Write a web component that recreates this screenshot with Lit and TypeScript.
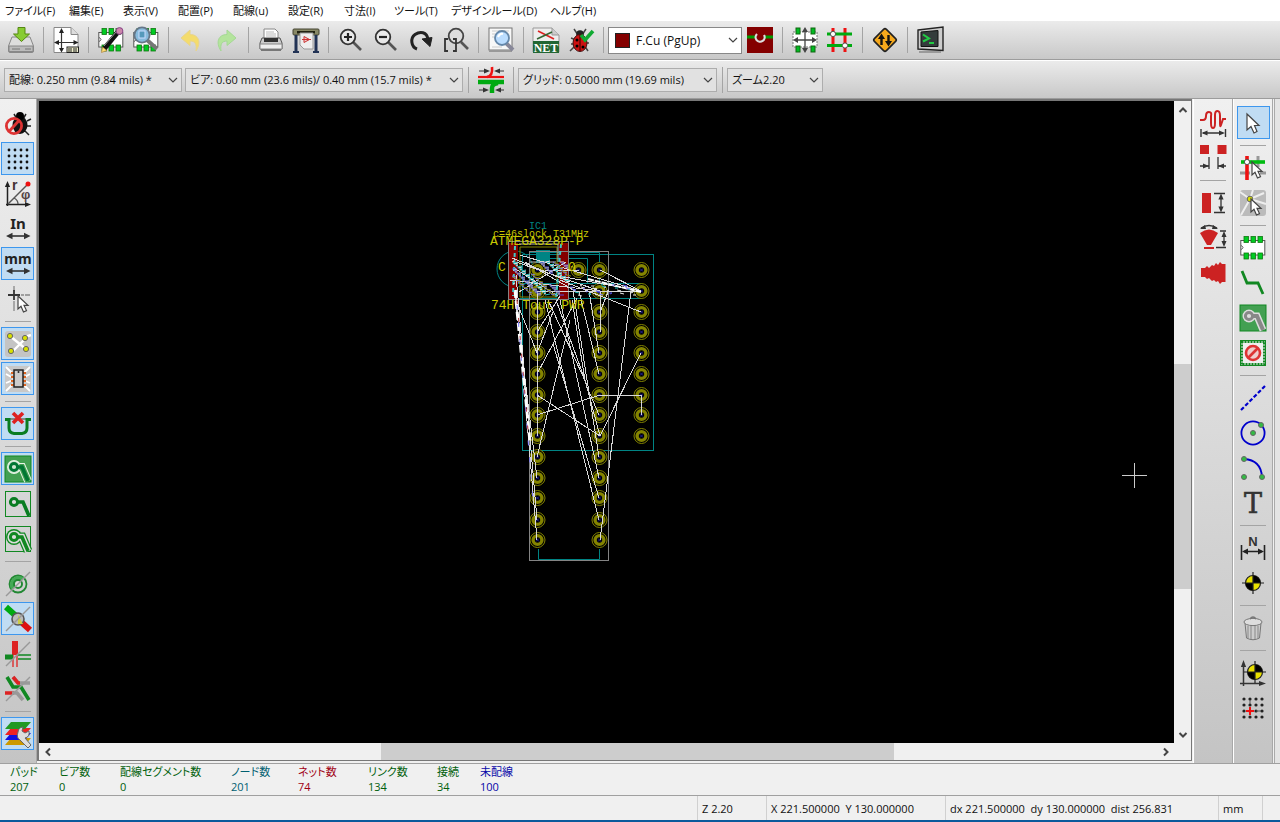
import { LitElement, html, svg, css } from "lit";
import { customElement } from "lit/decorators.js";
import { classMap } from "lit/directives/class-map.js";

const arrowCursor = (x: number, y: number) => svg`
  <path transform="translate(${x} ${y})" d="M0 0V13L3 10.300L5.500 16L8.500 14.600L6 9.300H10Z" fill="#fff" stroke="#444" stroke-width="1.200"/>`;

const chipPads = (w: number, y: number) => [0, 1, 2].map(i => svg`
  <rect x=${4 + i * w} y=${y} width="4.500" height="6" fill="#0c2" stroke="#171" stroke-width=".8"/>`);

const chip = svg`
  <rect x=".8" y="5.500" width="24" height="14.500" fill="#fff" stroke="#555"/>
  <path d="M1 10.500q4 2 0 4" fill="none" stroke="#555"/>
  ${chipPads(7, 1.500)}${chipPads(7, 18)}`;

const target = (x: number, y: number) => svg`
  <g transform="translate(${x} ${y})">
    <circle r="7.500" fill="#e8e000" stroke="#222" stroke-width="1.200"/>
    <path d="M0 0V-7.500A7.500 7.500 0 0 1 7.500 0ZM0 0V7.500A7.500 7.500 0 0 1 -7.500 0Z" fill="#000"/>
    <path d="M0 -11V11M-11 0H11" stroke="#222" stroke-width="1.200"/>
  </g>`;

const dot = (x: number, y: number, r = 2.5, fill = "#3b4") => svg`
  <circle cx=${x} cy=${y} r=${r} fill=${fill} stroke="#666" stroke-width="1"/>`;

const lens = (inner: unknown) => svg`
  <path d="M14.500 14.500L23 23" stroke="#555" stroke-width="2.600"/>
  <circle cx="10" cy="10" r="7.300" fill="#eee" fill-opacity=".7" stroke="#333" stroke-width="1.800"/>${inner}`;

const dimH = (y: number) => svg`
  <path d="M1 ${y - 4}V${y + 4}M25.500 ${y - 4}V${y + 4}M3 ${y}H23" stroke="#333" stroke-width="1.400"/>
  <path d="M1.500 ${y}l6 -2.600v5.200zM25 ${y}l-6 -2.600v5.200z" fill="#333"/>`;

const arrows = svg`
  <path d="M4 20H22" stroke="#333" stroke-width="1.600"/>
  <path d="M1 20l6.500 -3.200v6.400zM25.500 20l-6.500 -3.200v6.400z" fill="#333"/>`;

const slash = svg`<path d="M1 25L25 1" stroke="#999" stroke-width="1.400"/>`;

const icons: Record<string, unknown> = {
  save: svg`
    <path d="M4 10h18l3.500 9v5q0 1.500-1.500 1.500H2Q.5 25.500.5 24v-5z" fill="#ddd" stroke="#888"/>
    <path d="M1 19h24v5.500H1z" fill="#bbb" stroke="#888"/><path d="M4 22h8M18 21v2M20 21v2M22 21v2" stroke="#777"/>
    <path d="M10 .5h7v6.500h4.500L13.500 14.500 5.500 7H10z" fill="#8c3" stroke="#581"/>`,
  page: svg`
    <path d="M1 .5h17l7 7v18H1z" fill="#fff" stroke="#888"/><path d="M18 .5v7h7" fill="#ddd" stroke="#888"/>
    <path d="M8.500 3v21M3 15.500h21" stroke="#333" stroke-width="1.200"/>
    <path d="M8.500 1l2.500 5h-5zM8.500 25.500l2.500-4.500h-5zM1 15.500l5-2.500v5zM25.500 15.500l-5-2.500v5z" fill="#222"/>
    <rect x="14" y="20" width="11.500" height="5.500" fill="#eec" stroke="#222"/><path d="M15 22h4M20 22h4M15 24h4M20 24h4" stroke="#222"/>`,
  modedit: svg`${chip}
    <path d="M20 5L6 22" stroke="#111" stroke-width="5"/><path d="M18 5L6 19" stroke="#999" stroke-width="1"/>
    <path d="M4.500 20l4.500 3.500-5.500 2z" fill="#fd7" stroke="#a73" stroke-width=".6"/><circle cx="21.500" cy="4" r="3.400" fill="#c8a" stroke="#848"/>`,
  modview: svg`${chip}
    <path d="M14 13L24 22" stroke="#777" stroke-width="4"/>
    <circle cx="9" cy="8" r="7.600" fill="#8bd" stroke="#678" stroke-width="1.800"/><rect x="6" y="4" width="6" height="7" fill="#59b" stroke="#cdf"/>`,
  undo: svg`<path d="M3 11L12 3v4.500c8 0 12 7 6 16.500 1-7-1-10-6-10v4.500z" fill="#f4dc6c" stroke="#e8d48a"/>`,
  redo: svg`<path d="M23 11L14 3v4.500c-8 0-12 7-6 16.500-1-7 1-10 6-10v4.500z" fill="#b4e49c" stroke="#a4d894"/>`,
  print: svg`
    <path d="M6 2h11l3 3v8H6z" fill="#fff" stroke="#888"/><path d="M8 5h8M8 7h10M8 9h10" stroke="#bbb"/>
    <path d="M4 11h18l2 5v6H2v-6z" fill="#ccc" stroke="#555"/><path d="M6 11h14v4H6z" fill="#333"/>
    <path d="M2 17h22v5H2z" fill="#eee" stroke="#888"/><path d="M3 22h20v2H3z" fill="#777"/>`,
  plot: svg`
    <rect x="0" y="2" width="26" height="6" rx="1" fill="#886" stroke="#443"/><rect x="4" y="4" width="18" height="2.500" fill="#221"/>
    <path d="M3 8v16M23 8v16" stroke="#235" stroke-width="3"/><path d="M0 25h6M20 25h6" stroke="#235" stroke-width="2"/>
    <path d="M7 6h13v16H11l-4-4z" fill="#eee" stroke="#999"/><path d="M11 9.500v6l5.500-3zM9 12.500h9" fill="#ecc" stroke="#c33"/>`,
  zoomin: lens(svg`<path d="M6 10h8M10 6v8" stroke="#222" stroke-width="2.200"/>`),
  zoomout: lens(svg`<path d="M6 10h8" stroke="#222" stroke-width="2.200"/>`),
  redraw: svg`<path d="M9 22C3 20 2 11 7 7.500s12-3 13 5" fill="none" stroke="#222" stroke-width="3"/><path d="M14 12l10-1.500-2 9z" fill="#222" stroke="#222"/>`,
  zoomfit: svg`<path d="M18 15L25 22" stroke="#555" stroke-width="2.600"/>
    <circle cx="13" cy="9" r="7.300" fill="#ddd" stroke="#444" stroke-width="1.800"/>
    <path d="M5 12H2v12h3M10 12h3v12h-3" fill="none" stroke="#333" stroke-width="1.800"/>`,
  find: svg`<rect x="1" y="1" width="23" height="22" fill="#f8f8f8" stroke="#777"/>
    <path d="M4 4h17M4 7h17M4 10h17M4 20h10" stroke="#ccc"/><path d="M1 24h23" stroke="#999" stroke-width="2"/>
    <path d="M18 16L25 23" stroke="#889" stroke-width="4"/><circle cx="14" cy="11" r="7" fill="#bdf" stroke="#68a" stroke-width="1.800"/>
    <path d="M10 10q2-4 5-3" fill="none" stroke="#fff" stroke-width="2"/>`,
  net: svg`<path d="M0 1h19l7 7v17H0z" fill="#eee" stroke="#999"/><path d="M19 1v7h7" fill="#ccc" stroke="#999"/>
    <path d="M5 4L21 12" stroke="#d22" stroke-width="1.600"/><path d="M4 12L19 5" stroke="#363" stroke-width="1.600"/>
    <rect y="14" width="26" height="12" fill="#263"/>
    <text x="13" y="24.500" text-anchor="middle" font-family="Liberation Serif, serif" font-size="12" font-weight="bold" fill="#fff">NET</text>`,
  drc: svg`<path d="M6 2l4 6M18 2l-4 6M3 11l5 2M2 24l6-6M20 24l-4-6M3 17h4M21 16h-4" stroke="#444" stroke-width="1.500"/>
    <circle cx="12" cy="7" r="3.800" fill="#222"/><ellipse cx="12" cy="16" rx="7" ry="8.500" fill="#c11" stroke="#411"/>
    <path d="M12 8v16" stroke="#300"/><circle cx="9" cy="13" r="1.500"/><circle cx="9" cy="19" r="1.500"/><circle cx="15" cy="20" r="1.500"/>
    <path d="M13 8l4 5L25 4" fill="none" stroke="#1a3" stroke-width="3.600"/>`,
  layer: svg`<rect width="26" height="26" fill="#840000"/><path d="M0 10H26" stroke="#090" stroke-width="3"/><circle cx="13" cy="10" r="5" fill="#840000"/>
    <path d="M10 7a4.500 4.500 0 1 0 7 1" fill="none" stroke="#ddd" stroke-width="2.200"/>`,
  modmode: svg`<rect x="1" y="5" width="24" height="15" fill="#fff" stroke="#777" stroke-dasharray="2 1"/>
    ${[4, 19].map(x => [1, 19].map(y => svg`<rect x=${x} y=${y} width="4" height="6" fill="#0b2" stroke="#161"/>`))}
    <path d="M13 3v20M4 13h18" stroke="#444" stroke-width="1.300"/>
    <path d="M13 0l3 5h-6zM13 26l3-5h-6zM1 13l5-3v6zM25 13l-5-3v6z" fill="#444"/>`,
  trackmode: svg`<path d="M6 1V25M18 1V25" stroke="#e11" stroke-width="3"/><path d="M0 7H25M0 18.500H25" stroke="#0a1" stroke-width="3"/>
    <circle cx="6" cy="7" r="2.600" fill="#fff" stroke="#555"/><circle cx="18" cy="18.500" r="2.600" fill="#fff" stroke="#555"/>`,
  sign: svg`<rect x="4.500" y="4.500" width="17" height="17" rx="2" transform="rotate(45 13 13)" fill="#f5a81c" stroke="#222" stroke-width="1.600"/>
    <path d="M9.500 18V11M16.500 8v7" stroke="#111" stroke-width="2.400"/><path d="M9.500 6.500l3.500 5.500h-7zM16.500 19.500l3.500-5.500h-7z" fill="#111"/>`,
  console: svg`<path d="M1 3L26 0V23.500L1 22z" fill="#ccc" stroke="#222" stroke-width="1.400"/><path d="M4 5L21 3.500V19.500H4z" fill="#343c3c" stroke="#111"/>
    <path d="M6 7.500l6 4-6 3M12 16h5" fill="none" stroke="#2c4" stroke-width="2"/><path d="M2 25h22" stroke="#888" stroke-width="1.500"/>`,
  autowidth: svg`<path d="M0 10H26" stroke="#e11" stroke-width="2.200"/><path d="M0 15H26" stroke="#0a1" stroke-width="4.500"/>
    <path d="M14 0q1 9-5 10" fill="none" stroke="#e11" stroke-width="2.600"/><path d="M14 26v-5q0-4 6-5" fill="none" stroke="#0a1" stroke-width="4.500"/>
    <path d="M1 4h7M26 4h-7M1 23h7M26 23h-7" stroke="#333" stroke-width="1.200"/>
    <path d="M12 4L6 1.500v5zM16 4l6-2.500v5zM11 23l-6-2.500v5zM17 23l6-2.500v5z" fill="#333"/>`,
  drcoff: svg`<path d="M9 3l3 5M21 3l-3 5M22 10l4-2M22 15h4M20 20l4 4" stroke="#222" stroke-width="1.500"/><ellipse cx="15" cy="14" rx="7.500" ry="9" fill="#111"/><circle cx="15" cy="5" r="4"/>
    <circle cx="9" cy="15" r="7.600" fill="none" stroke="#d33" stroke-width="2.800"/><path d="M4 20.500L14 9.500" stroke="#d33" stroke-width="2.800"/>`,
  grid: [0, 1, 2, 3].map(i => [0, 1, 2, 3].map(j => svg`<circle cx=${4 + i * 6} cy=${4 + j * 6} r="1.400" fill="#111"/>`)),
  polar: svg`<path d="M2.500 25V4M1 23.500H22" stroke="#222" stroke-width="1.500"/><path d="M2.500 0l2.600 6h-5.200zM26 23.500l-6-2.600v5.200z" fill="#222"/>
    <path d="M3 23L22 4" stroke="#555" stroke-width="1.500"/><path d="M9 17q4 2 4 6" fill="none" stroke="#555" stroke-width="1.300"/>
    <circle cx="23" cy="3" r="2.500" fill="#e11"/>
    <text x="7" y="9" font-family="Liberation Sans" font-weight="bold" font-size="14" fill="#433">r</text>
    <text x="16" y="18" font-family="Liberation Sans" font-weight="bold" font-size="13" fill="#544">φ</text>`,
  inch: svg`${arrows}<text x="13" y="13" text-anchor="middle" font-family="Noto Sans" font-weight="bold" font-size="15" fill="#222">In</text>`,
  mm: svg`${arrows}<text x="13" y="13" text-anchor="middle" font-family="Noto Sans" font-weight="bold" font-size="14" fill="#222">mm</text>`,
  cursor: svg`<path d="M9 0V5M9 15V25M16 9h3M20 9h5" stroke="#888" stroke-width="1.300"/><path d="M9 4V14M3 9H15" stroke="#333" stroke-width="1.800"/>${arrowCursor(13, 10)}`,
  rats: svg`<rect width="26" height="26" rx="3" fill="#c4c4c4"/><path d="M5 5L22 19M6 22L21 7M20 6L26 4" stroke="#fff" stroke-width="2.400"/>
    ${[[5, 5], [20, 7], [6, 20], [21, 18]].map(([x, y]) => dot(x, y, 2.6, "#d8e000"))}`,
  modrats: svg`<rect width="26" height="26" rx="3" fill="#c8c8c8"/><path d="M1 1L8 8M25 1L18 8M1 8L8 12M25 8L18 12M1 17L8 14M25 17L18 14M1 25L8 18M25 25L18 18" stroke="#fff" stroke-width="1.800"/>
    <path d="M6 7h4M6 11h4M6 15h4M6 19h4M17 7h4M17 11h4M17 15h4M17 19h4" stroke="#d62" stroke-width="2.200"/>
    <rect x="9" y="4" width="9" height="17" fill="#ccc" stroke="#222" stroke-width="1.500"/><circle cx="13.500" cy="6" r="1" fill="#222"/>`,
  autodel: svg`<path d="M1 8H25" stroke="#888" stroke-width="2"/><path d="M0 8.500H4V17Q4 22 9 22.500H17Q22 22 22 17V8.500H26" fill="none" stroke="#0a7d22" stroke-width="3"/>
    <path d="M8 2L18 12M18 2L8 12" stroke="#d22" stroke-width="3.600"/>`,
  zonefill: svg`<rect width="26" height="26" fill="#43a052" stroke="#118822"/>
    <path d="M9 11H17L23 25" fill="none" stroke="#e8f4e8" stroke-width="8"/><circle cx="9" cy="11" r="7" fill="#e8f4e8"/>
    <path d="M9 11H17L23 25" fill="none" stroke="#43a052" stroke-width="6"/><circle cx="9" cy="11" r="6" fill="#cfe6d0"/>
    <path d="M9 11H17L23 25" fill="none" stroke="#073" stroke-width="3.600"/><circle cx="9" cy="11" r="3.600" fill="#cfe6d0" stroke="#073" stroke-width="3"/>`,
  zonenone: svg`<rect x=".5" y=".5" width="25" height="25" fill="none" stroke="#182"/>
    <path d="M9 11H18L24 25" fill="none" stroke="#0a7d22" stroke-width="3.600"/><circle cx="9" cy="11" r="3.600" fill="#ddd" stroke="#0a7d22" stroke-width="3"/>`,
  zoneoutline: svg`<rect x=".5" y=".5" width="25" height="25" fill="none" stroke="#182"/>
    <path d="M9 11H17L23 25" fill="none" stroke="#182" stroke-width="9"/><circle cx="9" cy="11" r="8" fill="#182"/>
    <path d="M9 11H17L23 25" fill="none" stroke="#ddd" stroke-width="6.500"/><circle cx="9" cy="11" r="6.600" fill="#ddd"/>
    <path d="M9 11H17L23 25" fill="none" stroke="#182" stroke-width="3.600"/><circle cx="9" cy="11" r="3.600" fill="#ddd" stroke="#182" stroke-width="3"/>`,
  viasketch: svg`<circle cx="13" cy="13" r="8.500" fill="none" stroke="#283" stroke-width="1.800"/><path d="M6.500 19A9 9 0 0 1 19 6.500Z" fill="#4a5"/>
    <circle cx="13" cy="13" r="4" fill="#ddd" stroke="#283" stroke-width="2"/>${slash}`,
  padsketch: svg`<path d="M1 1L11 10" stroke="#0a1" stroke-width="6"/><path d="M14 14L25 24" stroke="#d11" stroke-width="6"/>
    <circle cx="13" cy="13" r="6" fill="#bbb" stroke="#555" stroke-width="1.600"/><path d="M13 9v9h5z" fill="#cc4"/>${slash}`,
  tracksketch: svg`<rect x="7" width="6" height="14" fill="#d22"/><path d="M8 14V26M12 14V26" stroke="#d22" stroke-width="1.300"/>
    <rect y="13.500" width="8" height="5" fill="#182"/><path d="M13 14H26M13 18H26" stroke="#182" stroke-width="1.300"/>${slash}`,
  contrast: svg`<path d="M2 1L8 11H16L24 24" fill="none" stroke="#182" stroke-width="3.600"/><path d="M8 1L13 7H25" fill="none" stroke="#999" stroke-width="3.600"/>
    <path d="M8 1L13 7H15M0 17H9" fill="none" stroke="#d22" stroke-width="3.600"/><path d="M7 17H12L18 24" fill="none" stroke="#999" stroke-width="3.600"/>${slash}`,
  layers: svg`<path d="M6 17H26L20 24H0z" fill="#c90"/><path d="M6 12H26L20 19H0z" fill="#11d"/><path d="M6 7H26L20 14H0z" fill="#e22"/><path d="M6 1H26L20 8H0z" fill="#292"/>
    <path d="M13 11a5.500 5.500 0 0 1 5-5l-1 4 3 2 4-2q1 6-4 7l6 7-3 3-8-8q-4-2-2-8z" fill="#ddd" stroke="#666"/>`,
  tunelen: svg`<path d="M0 10H3Q6 10 6 6T9 2 11 6V13Q11 18 13 18T15 13V5Q15 1 17.500 1T20 6V13Q20 18 21 15T23 9H26" fill="none" stroke="#c22" stroke-width="2"/>${dimH(23)}`,
  pairgap: svg`<rect width="9" height="9" fill="#c22"/><rect x="17.500" width="9" height="9" fill="#c22"/>
    <path d="M9 12V24M18 12V24M0 21H9M18 21H26" stroke="#333" stroke-width="1.300"/><path d="M9 21l-6-2.500v5zM18 21l6-2.500v5z" fill="#333"/>`,
  rect: svg`<rect x="2" y="3" width="9" height="20" fill="#c22"/><path d="M14 3.500H25M14 22.500H25M21 6V20" stroke="#333" stroke-width="1.300"/>
    <path d="M21 3.500l2.600 6h-5.200zM21 22.500l2.600-6h-5.200z" fill="#333"/>`,
  cone: svg`<path d="M0 8Q9 1 18 8L11 20H7z" fill="#c22"/><path d="M4 23H14" stroke="#c22" stroke-width="2"/><path d="M1 3Q9-2 17 3" fill="none" stroke="#333" stroke-width="1.400"/>
    <path d="M0 4l5-4 1 4zM18 4l-5-4-1 4zM24 6l2.500 6h-5zM24 22l2.500-6h-5z" fill="#333"/><path d="M20 6H26M16 22.500H26M24 9V19" stroke="#333" stroke-width="1.300"/>`,
  shape: svg`<path d="M1 8H5L7 6L9 8L12 5L14 6L16 3L18 5L20 2L22 4H25.500V22H22L20 24L18 21L16 22L14 20L12 21L9 18L7 19L5 17H1z" fill="#c22"/>`,
  select: svg`<path transform="translate(7 4)" d="M0 0V16L4 12.500L7 19L10 17.500L7.500 11.500H12Z" fill="#fff" stroke="#444" stroke-width="1.200"/>`,
  highlight: svg`<path d="M18 1V12M0 18H10M20 18H26" stroke="#999" stroke-width="3"/><path d="M7 1V25" stroke="#e11" stroke-width="3.600"/><path d="M1 7H25" stroke="#0b1" stroke-width="3.600"/>
    <circle cx="7" cy="7" r="2.600" fill="#fff" stroke="#555"/>${arrowCursor(12, 7)}`,
  local: svg`<rect width="26" height="26" rx="3" fill="#bbb"/><path d="M10 9L1 25M10 9L0 2M10 9L13 0M10 9L24 3M10 9L26 14" stroke="#eee" stroke-width="2"/>${dot(10, 9, 2.8, "#d8e000")}${arrowCursor(11, 9)}`,
  module: chip,
  track: svg`<path d="M2 1L7 13H18L23 24" fill="none" stroke="#182" stroke-width="2.800"/>`,
  zone: svg`<rect width="26" height="26" fill="#43a052" stroke="#118822"/><path d="M9 11H17L23 25" fill="none" stroke="#ddd" stroke-width="7"/><circle cx="9" cy="11" r="6.500" fill="#ddd"/>
    <path d="M9 11H17L23 25" fill="none" stroke="#888" stroke-width="4"/><circle cx="9" cy="11" r="3.600" fill="#ddd" stroke="#888" stroke-width="3"/>`,
  keepout: svg`<rect x="1.500" y="1.500" width="23" height="23" fill="#eee" stroke="#182" stroke-width="3" stroke-dasharray="2 1"/><rect x=".5" y=".5" width="25" height="25" fill="none" stroke="#182"/>
    <circle cx="13" cy="13" r="7" fill="#ecc" stroke="#d33" stroke-width="2.600"/><path d="M8.500 17.500L17.500 8.500" stroke="#d33" stroke-width="2.600"/>`,
  line: svg`<path d="M1 25L25 1" stroke="#00c" stroke-width="2.200" stroke-dasharray="4 2"/>`,
  circle: svg`<circle cx="13" cy="13" r="11.600" fill="none" stroke="#00c" stroke-width="1.800"/>${dot(13, 13)}${dot(21, 5)}`,
  arc: svg`<path d="M4 4Q21 5 22 22" fill="none" stroke="#00c" stroke-width="1.800"/>${dot(4, 4)}${dot(4, 22)}${dot(22, 22)}`,
  text: svg`<text x="13" y="23" text-anchor="middle" font-family="DejaVu Serif, serif" font-size="27" fill="#333" stroke="#333" stroke-width=".6">T</text>`,
  dimension: svg`<path d="M1.500 10V25M24.500 10V25M4 16.500H22" stroke="#222" stroke-width="1.600"/><path d="M2 16.500l6-3v6zM24 16.500l-6-3v6z" fill="#222"/>
    <text x="13" y="11" text-anchor="middle" font-family="Liberation Sans" font-weight="bold" font-size="13" fill="#333">N</text>`,
  target: target(13, 13),
  trash: svg`<path d="M5 8H21L19.500 23Q13 26.500 6.500 23z" fill="#ccc" stroke="#777"/><path d="M8 11V23M11 11V24M15 11V24M18 11V23" stroke="#888"/>
    <ellipse cx="13" cy="7" rx="9" ry="3.600" fill="#ddd" stroke="#777"/><path d="M10 4q3-4 6 0" fill="none" stroke="#777" stroke-width="1.500"/>`,
  origin: svg`<path d="M3.500 26V6M0 23.500H21" stroke="#333" stroke-width="1.500"/><path d="M3.500 0l2.600 7h-5.200zM26 23.500l-7-2.600v5.200z" fill="#333"/>${target(15, 12)}`,
  gridorigin: svg`${[0, 1, 2, 3].map(i => [0, 1, 2, 3].map(j => svg`<circle cx=${4 + i * 6} cy=${4 + j * 6} r="1.600" fill="#222"/>`))}
    <path d="M10 12V20M6 16H14" stroke="#e11" stroke-width="2"/><path d="M10 5V9M16 16H21" stroke="#555"/>`,
};

type Tool = [string, string, boolean?] | null;

const fileTools: Tool[] = [
  ["save", "保存"], null, ["page", "ページ設定"], null, ["modedit", "フットプリントエディタ"], ["modview", "フットプリントビューア"], null,
  ["undo", "元に戻す"], ["redo", "やり直し"], null, ["print", "印刷"], ["plot", "プロット"], null,
  ["zoomin", "ズームイン"], ["zoomout", "ズームアウト"], ["redraw", "再描画"], ["zoomfit", "自動ズーム"], null,
  ["find", "検索"], null, ["net", "ネットリスト"], ["drc", "デザインルールチェック"], null,
];
const modeTools: Tool[] = [
  ["layer", "レイヤー"], null, ["modmode", "フットプリントモード"], ["trackmode", "配線モード"], null, ["sign", "FreeRoute"], null, ["console", "スクリプト"],
];
const widthTools: Tool[] = [null, ["autowidth", "自動配線幅"], null];
const optionTools: Tool[] = [
  ["drcoff", "DRC オフ"], ["grid", "グリッド", true], ["polar", "極座標"], ["inch", "インチ"], ["mm", "ミリ", true], ["cursor", "カーソル"], null,
  ["rats", "ラッツネスト", true], ["modrats", "フットプリントのラッツネスト", true], null, ["autodel", "自動削除", true], null,
  ["zonefill", "塗りつぶし", true], ["zonenone", "塗りつぶしなし"], ["zoneoutline", "外形のみ"], null,
  ["viasketch", "ビア"], ["padsketch", "パッド", true], ["tracksketch", "配線"], ["contrast", "ハイコントラスト"], null, ["layers", "レイヤーマネージャ", true],
];
const waveTools: Tool[] = [
  ["tunelen", "ライン"], ["pairgap", "ギャップ"], null, ["rect", "スタブ"], ["cone", "円弧スタブ"], ["shape", "多角形"],
];
const drawTools: Tool[] = [
  ["select", "選択", true], null, ["highlight", "ネットハイライト"], ["local", "ローカルラッツネスト"], null,
  ["module", "フットプリント追加"], ["track", "配線追加"], ["zone", "ゾーン追加"], ["keepout", "キープアウト"], null,
  ["line", "線"], ["circle", "円"], ["arc", "円弧"], ["text", "テキスト"], null, ["dimension", "寸法線"], ["target", "ターゲット"], null,
  ["trash", "削除"], null, ["origin", "原点"], ["gridorigin", "グリッド原点"],
];

const renderTools = (tools: Tool[]) => tools.map(t => t === null
  ? html`<span class="sep"></span>`
  : html`<button class=${classMap({ tool: true, on: !!t[2] })} aria-label=${t[1]}><svg class="icon" viewBox="0 0 26 26">${icons[t[0]]}</svg></button>`);

const combo = (kind: string, label: string, text: string, swatch = false) => html`
  <label class="combo ${kind}">
    <select aria-label=${label}><option>${text}</option></select>
    ${swatch ? html`<span class="swatch"></span>` : null}
    <svg class="chevron" viewBox="0 0 10 6"><path d="M1 1l4 4 4-4" fill="none" stroke="#444" stroke-width="1.200"/></svg>
  </label>`;

const scrollArrow = (label: string, d: string) => html`
  <button class="arrow" aria-label=${label}><svg viewBox="0 0 10 10"><path d=${d} fill="none" stroke="#444" stroke-width="2"/></svg></button>`;

const menus = ["ファイル(F)", "編集(E)", "表示(V)", "配置(P)", "配線(u)", "設定(R)", "寸法(I)", "ツール(T)", "デザインルール(D)", "ヘルプ(H)"];

const counts: [string, string, string][] = [
  ["パッド", "207", "green"], ["ビア数", "0", "green"], ["配線セグメント数", "0", "green"], ["ノード数", "201", "teal"],
  ["ネット数", "74", "red"], ["リンク数", "134", "green"], ["接続", "34", "green"], ["未配線", "100", "blue"],
];

const rowY = [270, 291, 312, 332, 353, 374, 395, 415, 436, 457, 478, 498, 520, 540];

const pad = (x: number, y: number) => svg`
  <circle cx=${x} cy=${y} r="7.500" fill="#000" stroke="#848400"/>
  <circle cx=${x} cy=${y} r="4.400" fill="none" stroke="#848400" stroke-width="3.400"/>
  <path d="M${x - 1.5} ${y - 1.5}l3 3M${x + 1.5} ${y - 1.5}l-3 3" stroke="#2020a0"/>`;

const airwires = [
  [518, 305, 537, 353], [537, 291, 537, 436], [537, 353, 553, 312], [537, 374, 553, 344], [553, 344, 577, 298], [548, 300, 587, 385],
  [537, 332, 560, 296], [556, 300, 585, 380], [545, 300, 599, 520], [553, 344, 599, 498], [572, 300, 585, 380], [560, 300, 599, 478],
  [573, 290, 599, 457], [579, 291, 599, 374], [589, 291, 599, 353], [600, 291, 600, 332], [600, 312, 608, 292],
  [631, 291, 600, 540], [641, 353, 600, 436], [641, 312, 560, 280], [600, 270, 641, 291], [520, 255, 641, 291], [516, 262, 600, 291],
  [537, 291, 641, 291], [570, 320, 537, 457], [537, 395, 600, 436], [537, 415, 600, 395], [600, 395, 641, 395],
  [641, 395, 641, 415], [587, 387, 599, 415], [585, 380, 600, 436], [516, 290, 537, 540], [516, 275, 537, 520],
  [515, 296, 537, 478], [510, 280, 600, 291], [525, 262, 575, 291], [545, 270, 579, 270],
  [559, 276, 641, 291], [512, 258, 570, 282], [514, 268, 558, 296], [519, 292, 566, 262],
];

const speckColors = ["#eee", "#5050e0", "#8080ff", "#20c0c0", "#ddd", "#848400"];
const speckles = Array.from({ length: 170 }, (_, i) => {
  const x = 512 + (i * 37) % 55, y = 262 + (i * 23) % 34;
  return svg`<path d="M${x} ${y}l${2 + i % 4} ${i % 3 - 1}" stroke=${speckColors[i % 6]}/>`;
});
const rowSpeckles = Array.from({ length: 36 }, (_, i) => {
  const x = 568 + (i * 29) % 66, y = 285 + (i * 7) % 11;
  return svg`<path d="M${x} ${y}l${2 + i % 3} ${i % 3 - 1}" stroke=${speckColors[i % 5]}/>`;
});

@customElement("app-root")
export class AppRoot extends LitElement {
  static styles = css`
    :host {
      display: flex; flex-direction: column; height: 100vh; overflow: hidden; background: #f0f0f0; color: #111;
      font: 11px/15px "Open Sans", "Noto Sans CJK JP", sans-serif; font-feature-settings: "palt";
    }
    *, *::before { box-sizing: border-box; }
    button { font: inherit; color: inherit; border: 0; padding: 0; background: none; }
    .menu { display: grid; grid-template-columns: 64px 54px 55px 55px 55px 56px 50px 57px 99px auto; justify-content: start; height: 20px; flex: none; background: #fff; padding-left: 5px; }
    .menu button { text-align: left; white-space: nowrap; }
    .bar { display: flex; align-items: center; height: 40px; flex: none; padding-left: 3px; background: linear-gradient(#ebebeb, #c8c8c8); border-top: 1px solid #fff; border-bottom: 1px solid #9c9c9c; }
    .bar.second { height: 39px; padding-left: 4px; }
    .tool { width: 35px; height: 35px; flex: none; display: grid; place-items: center; border: 1px solid transparent; }
    .tool.on { width: 33px; height: 33px; margin: 1px; background: #c0dcf3; border-color: #3d97ee; }
    .icon { width: 26px; height: 26px; overflow: visible; display: block; }
    .sep { flex: none; width: 10px; height: 26px; display: grid; justify-content: center; }
    .sep::before { content: ""; width: 1px; background: #a4a4a4; }
    .side .sep { width: 26px; height: 10px; align-content: center; justify-content: stretch; }
    .side .sep::before { width: auto; height: 1px; }
    .combo { display: grid; align-items: center; height: 24px; flex: none; }
    .combo + .combo { margin-left: 3px; }
    .combo > * { grid-area: 1 / 1; }
    .combo select { appearance: none; font: inherit; color: inherit; width: 100%; height: 100%; margin: 0; padding: 0 20px 0 4px; background: #e1e1e1; border: 1px solid #adadad; border-radius: 0; }
    .chevron { width: 10px; height: 6px; justify-self: end; margin-right: 4px; pointer-events: none; }
    .trackw { width: 178px; } .via { width: 278px; } .gridsize { width: 199px; } .zoom { width: 96px; }
    .layersel { width: 134px; height: 27px; }
    .layersel select { background: #fff; border-color: #888; padding-left: 27px; font-size: 12px; }
    .swatch { width: 15px; height: 15px; margin-left: 7px; background: #840000; border: 1px solid #222; pointer-events: none; }
    .work { flex: 1; min-height: 0; display: flex; }
    .side { display: flex; flex-direction: column; align-items: center; flex: none; width: 40px; padding-top: 6px; background: linear-gradient(#f0f0f0, #c4c4c4); border-left: 1px solid #fff; border-right: 1px solid #a8a8a8; }
    .side.left { width: 37px; padding-top: 7px; padding-right: 1px; border-left: 0; }
    .edge { width: 6px; flex: none; background: #e4e4e4; border-left: 1px solid #aaa; margin-left: 1px; }
    .view { flex: 1; min-width: 0; display: grid; grid-template: minmax(0, 1fr) 17px / minmax(0, 1fr) 17px; border: 2px solid #777; border-right-width: 1px; border-bottom-width: 1px; margin-right: 1px; margin-bottom: 2px; }
    .board { width: 100%; height: 100%; display: block; background: #000; }
    .scroll { display: flex; background: #f0f0f0; }
    .scroll.v { flex-direction: column; }
    .arrow { flex: none; width: 17px; height: 17px; display: grid; place-items: center; }
    .arrow svg { width: 10px; height: 10px; }
    .thumb { background: #cdcdcd; }
    .v .lead { flex: 246; } .v .thumb { flex: 225; } .v .tail { flex: 137; }
    .h .lead { flex: 325; } .h .thumb { flex: 513; } .h .tail { flex: 263; }
    .counts { display: grid; grid-template-columns: 49px 61px 111px 67px 70px 69px 43px auto; justify-content: start; flex: none; height: 33px; margin: 0; padding-left: 10px; border-top: 1px solid #a0a0a0; border-bottom: 1px solid #a0a0a0; white-space: nowrap; }
    .counts dt, .counts dd { margin: 0; }
    .green { color: #00600c; } .teal { color: #006070; } .red { color: #a00014; } .blue { color: #0808a8; }
    .status { display: grid; grid-template-columns: 1fr 69px 179px 273px 44px 18px; flex: none; height: 26px; border-bottom: 2px solid #0a5a9c; white-space: pre; }
    .status span { border-left: 1px solid #d0d0d0; padding: 5px 0 0 4px; }
    .status span:first-child { border: 0; }
  `;

  render() {
    return html`
      <nav class="menu">${menus.map(m => html`<button>${m}</button>`)}</nav>
      <div class="bar">
        ${renderTools(fileTools)}
        ${combo("layersel", "レイヤー", "F.Cu (PgUp)", true)}
        ${renderTools(modeTools)}
      </div>
      <div class="bar second">
        ${combo("trackw", "配線幅", "配線: 0.250 mm (9.84 mils) *")}
        ${combo("via", "ビアサイズ", "ビア: 0.60 mm (23.6 mils)/ 0.40 mm (15.7 mils) *")}
        ${renderTools(widthTools)}
        ${combo("gridsize", "グリッド", "グリッド: 0.5000 mm (19.69 mils)")}
        <span class="sep"></span>
        ${combo("zoom", "ズーム", "ズーム2.20")}
      </div>
      <div class="work">
        <div class="side left">${renderTools(optionTools)}</div>
        <div class="view">
          ${this.board()}
          <div class="scroll v">
            ${scrollArrow("上", "M1.500 7L5 3.500 8.500 7")}
            <span class="lead"></span><span class="thumb"></span><span class="tail"></span>
            ${scrollArrow("下", "M1.500 3L5 6.500 8.500 3")}
          </div>
          <div class="scroll h">
            ${scrollArrow("左", "M7 1.500L3.500 5 7 8.500")}
            <span class="lead"></span><span class="thumb"></span><span class="tail"></span>
            ${scrollArrow("右", "M3 1.500L6.500 5 3 8.500")}
          </div>
          <div class="scroll"></div>
        </div>
        <div class="side wave">${renderTools(waveTools)}</div>
        <div class="side draw">${renderTools(drawTools)}</div>
        <div class="edge"></div>
      </div>
      <dl class="counts">${counts.map(([k, v, c]) => html`<div class=${c}><dt>${k}</dt><dd>${v}</dd></div>`)}</dl>
      <div class="status">
        <span></span><span>Z 2.20</span><span>X 221.500000  Y 130.000000</span><span>dx 221.500000  dy 130.000000  dist 256.831</span><span>mm</span><span></span>
      </div>`;
  }

  private board() {
    return html`<svg class="board"><g transform="translate(-39 -101)">
      <g fill="none" stroke="#008484">
        <rect x="522.500" y="254.500" width="131" height="196"/>
        <path d="M538.500 549V559.500H599.500V549M529 252.500H599.500V283M538 258.500H587.500V283"/>
        <rect x="516.500" y="283.500" width="125" height="15"/>
        <circle cx="515" cy="269" r="18"/>
      </g>
      ${rowY.map(y => [pad(537.5, y), pad(599.5, y)])}
      ${rowY.slice(0, 9).map(y => pad(641.5, y))}
      ${pad(578.5, 270)}
      <rect x="509" y="243" width="9" height="56" fill="#840000"/><rect x="559" y="243" width="9" height="56" fill="#840000"/>
      <rect x="536" y="250" width="14" height="13" fill="#008484"/><path d="M520 247H557V297H520z" fill="none" stroke="#848400"/>
      <path d="M519 244H558V262M530 262H556" fill="none" stroke="#bbb"/>
      <g fill="none" stroke="#848484"><rect x="529.500" y="251.500" width="79" height="309"/><rect x="508.500" y="241.500" width="60" height="58"/></g>
      <g stroke="#d8d8d8" shape-rendering="crispEdges">${airwires.map(([a, b, c, d]) => svg`<path d="M${a} ${b}L${c} ${d}"/>`)}</g>
      <path d="M515 290L530 442" stroke="#fff" stroke-width="3" stroke-dasharray="8 3"/>
      <path d="M517 305L533 500" stroke="#8080ff" stroke-dasharray="5 12"/><path d="M517 300L528 430" stroke="#b03030" stroke-dasharray="4 14"/>
      <path d="M588 279L641 292" stroke="#fff" stroke-width="2" stroke-dasharray="6 1"/>
      <path d="M515 246L513 296M561 244L556 298" stroke="#40c8c8" stroke-width="2" stroke-dasharray="4 3"/>
      ${speckles}${rowSpeckles}
      <g font-family="Liberation Mono, monospace" font-size="13" fill="#c8c800">
        <text x="493" y="237" font-size="10">c=46slock.T31MHz</text>
        <text x="490" y="245">ATMEGA328P-P</text>
        <text x="498" y="271">C</text><text x="568" y="271">0</text>
        <text x="491" y="309">74H Tout PWR</text>
        <text x="529" y="229" font-size="10" fill="#008484">IC1</text>
      </g>
      <path d="M1134.500 463V488M1122 475.500H1147" stroke="#ccc"/>
    </g></svg>`;
  }
}
